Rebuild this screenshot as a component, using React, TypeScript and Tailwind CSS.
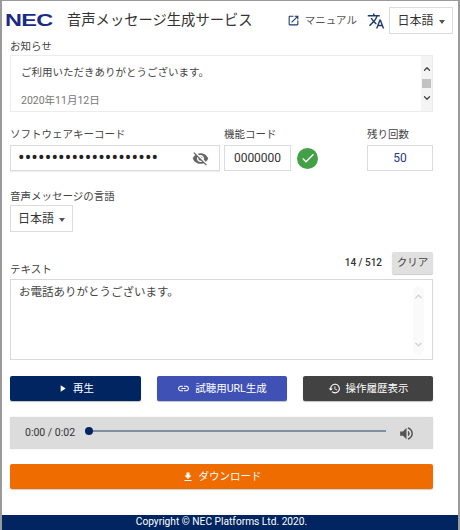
import { ChevronUp, ChevronDown } from "lucide-react";

function Mi({ d, size, className }: { d: string; size: number; className: string }) {
  return (
    <svg viewBox="0 0 24 24" width={size} height={size} fill="currentColor" className={`shrink-0 ${className}`}>
      <path d={d} />
    </svg>
  );
}

const ICON = {
  open: "M19 19H5V5h7V3H5c-1.11 0-2 .9-2 2v14c0 1.1.89 2 2 2h14c1.1 0 2-.9 2-2v-7h-2v7zM14 3v2h3.59l-9.83 9.83 1.41 1.41L19 6.41V10h2V3h-7z",
  translate: "M12.87 15.07l-2.54-2.51.03-.03c1.74-1.94 2.98-4.17 3.71-6.53H17V4h-7V2H8v2H1v1.99h11.17C11.5 7.92 10.44 9.75 9 11.35 8.07 10.32 7.3 9.19 6.69 8h-2c.73 1.63 1.73 3.17 2.98 4.56l-5.09 5.02L4 19l5-5 3.11 3.11.76-2.04zM18.5 10h-2L12 22h2l1.12-3h4.75L21 22h2l-4.5-12zm-2.62 7l1.62-4.33L19.12 17h-3.24z",
  eyeOff: "M12 7c2.76 0 5 2.24 5 5 0 .65-.13 1.26-.36 1.83l2.92 2.92c1.51-1.26 2.7-2.89 3.43-4.75-1.73-4.39-6-7.5-11-7.5-1.4 0-2.74.25-3.98.7l2.16 2.16C10.74 7.13 11.35 7 12 7zM2 4.27l2.28 2.28.46.46C3.08 8.3 1.78 10.02 1 12c1.73 4.39 6 7.5 11 7.5 1.55 0 3.03-.3 4.38-.84l.42.42L19.73 22 21 20.73 3.27 3 2 4.27zM7.53 9.8l1.55 1.55c-.05.21-.08.43-.08.65 0 1.66 1.34 3 3 3 .22 0 .44-.03.65-.08l1.55 1.55c-.67.33-1.41.53-2.2.53-2.76 0-5-2.24-5-5 0-.79.2-1.53.53-2.2zm4.31-.78l3.15 3.15.02-.16c0-1.66-1.34-3-3-3l-.17.01z",
  check: "M9 16.17L4.83 12l-1.42 1.41L9 19 21 7l-1.41-1.41z",
  play: "M8 5v14l11-7z",
  link: "M3.9 12c0-1.71 1.39-3.1 3.1-3.1h4V7H7c-2.76 0-5 2.24-5 5s2.24 5 5 5h4v-1.9H7c-1.71 0-3.1-1.39-3.1-3.1zM8 13h8v-2H8v2zm9-6h-4v1.9h4c1.71 0 3.1 1.39 3.1 3.1s-1.39 3.1-3.1 3.1h-4V17h4c2.76 0 5-2.24 5-5s-2.24-5-5-5z",
  history: "M13 3c-4.97 0-9 4.03-9 9H1l3.89 3.89.07.14L9 12H6c0-3.87 3.13-7 7-7s7 3.13 7 7-3.13 7-7 7c-1.93 0-3.68-.79-4.94-2.06l-1.42 1.42C8.27 19.99 10.51 21 13 21c4.97 0 9-4.03 9-9s-4.03-9-9-9zm-1 5v5l4.28 2.54.72-1.21-3.5-2.08V8H12z",
  download: "M19 9h-4V3H9v6H5l7 7 7-7zM5 18v2h14v-2H5z",
  volume: "M3 9v6h4l5 5V4L7 9H3zm13.5 3c0-1.77-1.02-3.29-2.5-4.03v8.05c1.48-.73 2.5-2.25 2.5-4.02zM14 3.23v2.06c2.89.86 5 3.54 5 6.71s-2.11 5.85-5 6.71v2.06c4.01-.91 7-4.49 7-8.77s-2.99-7.86-7-8.77z",
};

function Caret() {
  return <span className="ml-[5px] inline-block h-0 w-0 translate-y-[1px] border-x-[3.5px] border-t-[4px] border-x-transparent border-t-[#555]" />;
}

function Field({ className, children }: { className: string; children: React.ReactNode }) {
  return <div className={`flex h-[26px] items-center border border-[#dcdcdc] bg-white text-[12px] text-[#333] ${className}`}>{children}</div>;
}

function ActionButton({ className, icon, label }: { className: string; icon: React.ReactNode; label: string }) {
  return (
    <button className={`flex h-[25px] items-center justify-center gap-[5px] rounded-[2px] text-[10.5px] text-white shadow-[0_1px_1px_rgba(0,0,0,0.25)] ${className}`}>
      {icon}
      {label}
    </button>
  );
}

export default function App() {
  return (
    <div className="flex h-[530px] w-[460px] flex-col overflow-hidden border-x-[2px] border-t-[1px] border-x-[#9a9a9a] border-t-[#9a9a9a] bg-white font-['Roboto','Noto_Sans_CJK_JP',sans-serif] text-[#444]">
      <header className="flex h-[38px] shrink-0 items-center pl-[3px] pr-[5px] pt-[1px]">
        <span className="w-[42px] origin-left scale-x-[1.38] font-['Liberation_Sans',sans-serif] text-[17px] font-bold leading-none tracking-[-0.5px] text-[#1a2a86]">NEC</span>
        <h1 className="ml-[20px] text-[14.3px] font-normal leading-none text-[#333]">音声メッセージ生成サービス</h1>
        <div className="ml-auto flex items-center">
          <Mi d={ICON.open} size={13} className="text-[#1e3a6e]" />
          <span className="ml-[5px] text-[10.5px] text-[#555]">マニュアル</span>
          <Mi d={ICON.translate} size={18} className="ml-[10px] text-[#1e3a6e]" />
          <div className="ml-[4px] flex h-[27px] w-[64px] items-center justify-center border border-[#dcdcdc] text-[12px] text-[#333]">
            日本語<Caret />
          </div>
        </div>
      </header>

      <main className="flex flex-1 flex-col pl-[8px] pr-[25px]">
        <label className="h-[16px] text-[10.5px] leading-[16px]">お知らせ</label>
        <div className="flex h-[57px] border border-[#ececec]">
          <div className="flex flex-1 flex-col justify-between pb-[2px] pl-[10px] pt-[9px]">
            <p className="text-[10.5px] leading-[16px] text-[#444]">ご利用いただきありがとうございます。</p>
            <p className="text-[10.5px] leading-[16px] text-[#777]">2020年11月12日</p>
          </div>
          <div className="flex w-[11px] flex-col items-center justify-between bg-[#f4f4f4] py-[8px]">
            <ChevronUp size={10} strokeWidth={3} className="text-[#444]" />
            <div className="h-[9px] w-[9px] bg-[#c2c2c2]" />
            <ChevronDown size={10} strokeWidth={3} className="text-[#444]" />
          </div>
        </div>

        <div className="mt-[15px] flex">
          <div className="w-[214px]">
            <label className="block h-[18px] text-[10.5px] leading-[16px]">ソフトウェアキーコード</label>
            <Field className="w-[210px] justify-between pl-[7px] pr-[10px] shadow-[0_1px_1px_rgba(0,0,0,0.06)]">
              <span className="font-['Roboto',sans-serif] text-[19.5px] leading-none tracking-[0.1px] text-[#222]">•••••••••••••••••••••</span>
              <Mi d={ICON.eyeOff} size={17} className="text-[#666]" />
            </Field>
          </div>
          <div className="w-[143px]">
            <label className="block h-[18px] text-[10.5px] leading-[16px]">機能コード</label>
            <div className="flex items-center">
              <Field className="w-[67px] justify-center">0000000</Field>
              <span className="ml-[6px] flex h-[21px] w-[21px] items-center justify-center rounded-full bg-[#43a047]">
                <Mi d={ICON.check} size={16} className="text-white" />
              </span>
            </div>
          </div>
          <div className="w-[66px]">
            <label className="block h-[18px] text-[10.5px] leading-[16px]">残り回数</label>
            <Field className="justify-center border-[#d4d4d4] !text-[#1e3a8a]">50</Field>
          </div>
        </div>

        <label className="mt-[18px] block h-[16px] text-[10.5px] leading-[16px]">音声メッセージの言語</label>
        <div className="flex h-[27px] w-[63px] items-center justify-center border border-[#dcdcdc] text-[12px] text-[#333]">
          日本語<Caret />
        </div>

        <div className="mt-[20px] flex items-end">
          <label className="h-[16px] translate-y-[4px] text-[10.5px] leading-[16px]">テキスト</label>
          <span className="mb-[4px] ml-auto text-[10px] font-medium text-[#333]">14 / 512</span>
          <button className="ml-[10px] h-[22px] w-[41px] rounded-[2px] bg-[#e0e0e0] text-[10.5px] text-[#444] shadow-[0_1px_1px_rgba(0,0,0,0.2)]">クリア</button>
        </div>
        <div className="mt-[5px] flex h-[81px] justify-between border border-[#d8d8d8]">
          <p className="pl-[8px] pt-[4px] text-[11.5px] leading-[16px] text-[#444]">お電話ありがとうございます。</p>
          <div className="mr-[8px] mt-[6px] flex h-[69px] w-[11px] flex-col items-center justify-between rounded-full bg-[#fafafa] py-[5px]">
            <ChevronUp size={11} strokeWidth={2.5} className="text-[#ccc]" />
            <ChevronDown size={11} strokeWidth={2.5} className="text-[#ccc]" />
          </div>
        </div>

        <div className="mt-[16px] flex justify-between">
          <ActionButton className="w-[131px] bg-[#002561]" icon={<Mi d={ICON.play} size={11} className="" />} label="再生" />
          <ActionButton className="w-[130px] bg-[#3f51b5]" icon={<Mi d={ICON.link} size={13} className="" />} label="試聴用URL生成" />
          <ActionButton className="w-[130px] bg-[#424242]" icon={<Mi d={ICON.history} size={13} className="" />} label="操作履歴表示" />
        </div>

        <div className="mt-[16px] flex h-[32px] items-center rounded-[2px] bg-[#dcdcdc] pl-[15px] pr-[18px] shadow-[0_0_1px_rgba(0,0,0,0.3)]">
          <span className="w-[60px] text-[10.5px] text-[#333]">0:00 / 0:02</span>
          <div className="relative flex h-[7px] flex-1 -translate-y-[2px] items-center">
            <div className="h-[2px] w-full bg-[#7f8fa3]" />
            <span className="absolute left-0 h-[8px] w-[8px] rounded-full bg-[#002561]" />
          </div>
          <Mi d={ICON.volume} size={17} className="ml-[12px] text-[#555]" />
        </div>

        <button className="mt-[15px] flex h-[25px] shrink-0 items-center justify-center gap-[5px] rounded-[2px] bg-[#ef6c00] text-[10.5px] text-white shadow-[0_1px_1px_rgba(0,0,0,0.2)]">
          <Mi d={ICON.download} size={12} className="" />
          ダウンロード
        </button>
      </main>

      <footer className="flex h-[15px] shrink-0 items-center justify-center bg-[#002561] pr-[17px] text-[10.2px] leading-none text-white">
        Copyright © NEC Platforms Ltd. 2020.
      </footer>
    </div>
  );
}
